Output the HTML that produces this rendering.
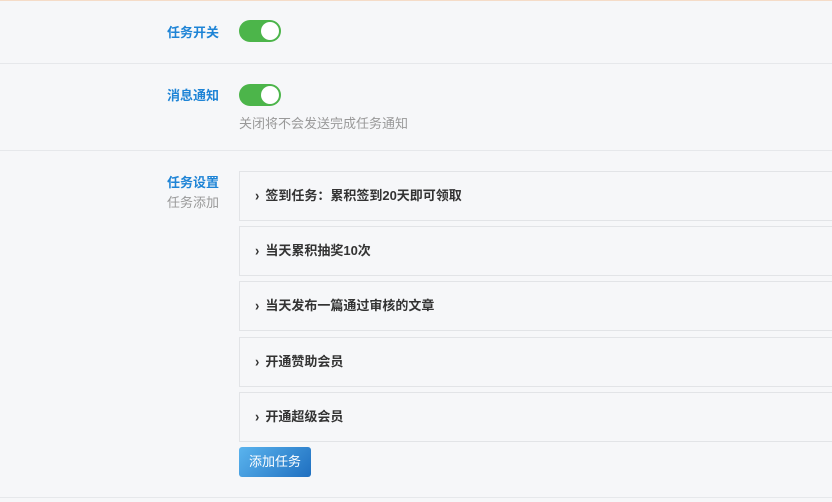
<!DOCTYPE html>
<html><head><meta charset="utf-8"><style>
body{margin:0;width:832px;height:502px;background:#f6f7f9;font-family:"Liberation Sans","Noto Sans CJK SC",sans-serif;position:relative;overflow:hidden}
.top{position:absolute;left:0;top:0;width:832px;height:1px;background:#f5dcc8}
.hr{position:absolute;left:0;width:832px;height:1px;background:#e6e8eb}
.lbl{position:absolute;left:167px;font-size:13px;font-weight:bold;color:#1e84d6}
.sub{position:absolute;left:167px;font-size:13px;color:#999}
.tg{position:absolute;left:239px;width:42px;height:22px;border-radius:11px;background:#4cb54a}
.tg:after{content:"";position:absolute;right:2px;top:2px;width:18px;height:18px;border-radius:50%;background:#fff}
.hint{position:absolute;left:239px;top:113px;font-size:13px;color:#999}
.p{position:absolute;left:239px;width:600px;height:48px;border:1px solid #e2e4e7;background:#f6f7f9;font-size:13px;font-weight:bold;color:#333;line-height:48px;box-sizing:border-box;height:50px;padding-left:15px}
.p b{font-weight:bold;margin-right:6px;display:inline-block;transform:scaleY(1.1)}
.btn{position:absolute;left:239px;top:447px;width:72px;height:30px;border-radius:3px;background:linear-gradient(135deg,#5ab4ee,#1f6fc0);color:#fff;font-size:13px;line-height:30px;text-align:center}
</style></head><body>
<div class="top"></div>
<div class="lbl" style="top:22px">任务开关</div>
<div class="tg" style="top:20px"></div>
<div class="hr" style="top:63px"></div>
<div class="lbl" style="top:85px">消息通知</div>
<div class="tg" style="top:84px"></div>
<div class="hint">关闭将不会发送完成任务通知</div>
<div class="hr" style="top:150px"></div>
<div class="lbl" style="top:172px">任务设置</div>
<div class="sub" style="top:192px">任务添加</div>
<div class="p" style="top:171px"><b>›</b>签到任务：累积签到20天即可领取</div>
<div class="p" style="top:226px"><b>›</b>当天累积抽奖10次</div>
<div class="p" style="top:281px"><b>›</b>当天发布一篇通过审核的文章</div>
<div class="p" style="top:337px"><b>›</b>开通赞助会员</div>
<div class="p" style="top:392px"><b>›</b>开通超级会员</div>
<div class="btn">添加任务</div>
<div class="hr" style="top:497px"></div>
</body></html>
